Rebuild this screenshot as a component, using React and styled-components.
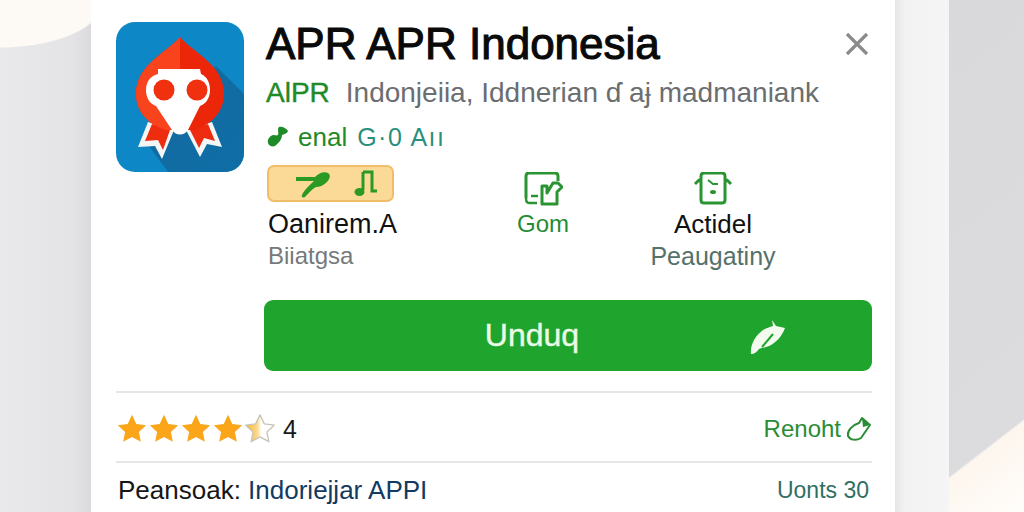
import React from "react";
import styled, { createGlobalStyle } from "styled-components";

const Global = createGlobalStyle`
  html, body { margin: 0; padding: 0; background: #e8e8ea; }
  body { font-family: "Liberation Sans", Arial, sans-serif; }
`;

const Page = styled.div`
  display: flex;
  width: 1024px;
  height: 512px;
  overflow: hidden;
`;
const LeftMargin = styled.div`
  width: 91px;
  flex: none;
  background:
    radial-gradient(ellipse 105px 48px at 0 0, #fdfaf6 98%, transparent 100%),
    linear-gradient(90deg, #e9e9eb 0%, #e4e4e6 80%, #dadadc 100%);
`;
const Card = styled.main`
  width: 804px;
  flex: none;
  box-sizing: border-box;
  padding: 22px 23px 0 25px;
  background: #fff;
`;
const Strip = styled.div`
  width: 54px;
  flex: none;
  background: linear-gradient(90deg, #e6e6e7 0%, #f2f2f3 18%, #f5f5f6 100%);
`;
const RightMargin = styled.div`
  flex: 1;
  background: linear-gradient(142.3deg, #d9d9dc 0, #dcdcdf 377px, #fdf6ee 379px, #fffdfb 100%);
`;
const Top = styled.section`
  display: flex;
  gap: 21px;
`;
const AppIcon = styled.svg`
  width: 128px;
  height: 150px;
  flex: none;
`;
const Info = styled.div`
  flex: 1;
  min-width: 0;
`;
const TitleRow = styled.div`
  display: flex;
  justify-content: space-between;
  align-items: center;
  height: 44px;
  padding-right: 2px;
`;
const Title = styled.h1`
  margin: 0 0 0 1px;
  font-size: 44px;
  font-weight: 400;
  -webkit-text-stroke: 1.1px #0a0a0a;
  color: #0a0a0a;
  white-space: nowrap;
`;
const Close = styled.svg`
  width: 26px;
  height: 26px;
  flex: none;
`;
const Subtitle = styled.p`
  margin: 11px 0 0 1px;
  font-size: 28px;
  line-height: 32px;
  color: #6b6e70;
  white-space: nowrap;
`;
const GreenStrong = styled.span`
  color: #1f8a28;
  -webkit-text-stroke: 0.4px #1f8a28;
  margin-right: 16px;
`;
const Meta = styled.div`
  display: flex;
  align-items: center;
  gap: 9px;
  margin: 13px 0 0 2px;
  height: 30px;
  font-size: 26px;
  color: #1f8a28;
`;
const MetaSoft = styled.span`
  color: #2c8f7d;
  font-size: 25px;
  letter-spacing: 1.5px;
  margin-left: 1px;
`;
const Features = styled.div`
  display: grid;
  grid-template-columns: 193px 170px 170px;
  margin-top: 13px;
`;
const Feature = styled.div`
  display: flex;
  flex-direction: column;
  align-items: ${(p) => (p.$start ? "flex-start" : "center")};
`;
const Badge = styled.div`
  box-sizing: border-box;
  display: flex;
  align-items: center;
  justify-content: space-between;
  width: 127px;
  height: 37px;
  margin-left: 2px;
  padding: 0 14px 0 26px;
  background: #fbd996;
  border: 2px solid #f1bd6a;
  border-radius: 7px;
`;
const FeatureIcon = styled.svg`
  display: block;
  width: 40px;
  height: 36px;
  margin-top: 7px;
`;
const FeatureLabel = styled.div`
  margin: ${(p) => (p.$start ? "6px 0 0 3px" : "0")};
  font-size: ${(p) => p.$size}px;
  line-height: 32px;
  color: ${(p) => p.$color};
  white-space: nowrap;
`;
const FeatureNote = styled.div`
  margin: 0 0 0 ${(p) => (p.$start ? "3px" : "0")};
  font-size: ${(p) => p.$size}px;
  line-height: 32px;
  color: ${(p) => p.$color};
  white-space: nowrap;
`;
const Download = styled.button`
  display: block;
  position: relative;
  box-sizing: border-box;
  width: 608px;
  height: 71px;
  margin: 28px 0 0 148px;
  border: 0;
  border-radius: 9px;
  background: #1fa52d;
  color: #eafbe6;
  font: 400 32px "Liberation Sans", Arial, sans-serif;
  -webkit-text-stroke: 0.4px #eafbe6;
  padding: 0 72px 0 0;
`;
const DownloadIcon = styled.svg`
  position: absolute;
  right: 85px;
  top: 19px;
  width: 38px;
  height: 36px;
`;
const Divider = styled.hr`
  margin: ${(p) => p.$top}px 0 0;
  border: 0;
  height: 2px;
  background: #e6e6e6;
`;
const Row = styled.div`
  display: flex;
  align-items: center;
  justify-content: space-between;
  box-sizing: border-box;
  height: ${(p) => p.$h}px;
  padding-top: ${(p) => p.$pad}px;
`;
const Stars = styled.div`
  display: flex;
  align-items: center;
  gap: 0;
  margin-left: -1px;
`;
const Star = styled.svg`
  width: 34px;
  height: 34px;
  display: block;
  margin-right: -2px;
`;
const Score = styled.span`
  margin-left: 8px;
  font-size: 25px;
  color: #1a1a1a;
`;
const ReportLink = styled.div`
  display: flex;
  align-items: center;
  gap: 5px;
  font-size: 24px;
  color: #2a8c34;
`;
const SmallIcon = styled.svg`
  width: 26px;
  height: 26px;
  display: block;
`;
const Publisher = styled.div`
  margin-left: 2px;
  font-size: 26px;
  color: #161616;
  white-space: nowrap;
`;
const PublisherName = styled.span`
  color: #123a62;
`;
const Units = styled.div`
  margin-right: 3px;
  font-size: 23px;
  color: #2f6f62;
`;

const starPath = "M15 2.5l3.8 8 8.7 1.1-6.4 6 1.7 8.6L15 22l-7.8 4.2 1.7-8.6-6.4-6 8.7-1.1z";

function RatingStar({ half }) {
  if (half) {
    return (
      <Star viewBox="0 0 30 30">
        <defs>
          <linearGradient id="halfStar">
            <stop offset="0" stopColor="#fbb22e" />
            <stop offset="0.4" stopColor="#fdd98a" />
            <stop offset="0.55" stopColor="#ffffff" />
          </linearGradient>
        </defs>
        <path d={starPath} fill="url(#halfStar)" stroke="#c8c4b8" strokeWidth="1.2" strokeLinejoin="round" />
      </Star>
    );
  }
  return (
    <Star viewBox="0 0 30 30">
      <path d={starPath} fill="#fba61a" />
    </Star>
  );
}

export default function App() {
  return (
    <Page>
      <Global />
      <LeftMargin />
      <Card>
        <Top>
          <AppIcon viewBox="0 0 128 150">
            <defs>
              <linearGradient id="shade" x1="0" y1="0" x2="1" y2="1">
                <stop offset="0" stopColor="#14699f" />
                <stop offset="1" stopColor="#0f6ea6" />
              </linearGradient>
              <clipPath id="tile">
                <rect width="128" height="150" rx="19" />
              </clipPath>
            </defs>
            <g clipPath="url(#tile)">
              <rect width="128" height="150" fill="#0e87c6" />
              <path d="M100 44L128 72V150H52L30 120Z" fill="url(#shade)" />
              <path d="M32 100L22 125L39 124L46 137L58 108Z" fill="#f3f6f5" />
              <path d="M36 102L29 119L42 118L47 128L54 108Z" fill="#ee2c10" />
              <path d="M96 100L106 125L91 122L84 135L70 108Z" fill="#f3f6f5" />
              <path d="M92 102L99 119L88 116L83 126L74 108Z" fill="#ee2c10" />
              <path d="M64 15C52 30 20 42 20 72C20 92 36 104 50 108H78C92 104 108 92 108 72C108 42 76 30 64 15Z" fill="#ec2608" />
              <path d="M64 15C52 30 20 42 20 72C20 92 36 104 50 108H64Z" fill="#f8431c" />
              <path d="M42 47H84L85 52C92 55 94 62 94 68C94 76 90 82 84 84L72 108C68 114 60 114 56 108L40 84C34 82 30 76 30 68C30 60 34 54 42 52Z" fill="#fff" />
              <circle cx="48" cy="68" r="10.5" fill="#f1300f" />
              <circle cx="81" cy="68" r="10.5" fill="#f1300f" />
            </g>
          </AppIcon>
          <Info>
            <TitleRow>
              <Title>APR APR Indonesia</Title>
              <Close viewBox="0 0 26 26">
                <path d="M3 3L23 23M23 3L3 23" stroke="#8b8b8b" strokeWidth="3.2" fill="none" />
              </Close>
            </TitleRow>
            <Subtitle>
              <GreenStrong>AlPR</GreenStrong>
              Indonjeiia, Iddnerian ɗ aɉ ṁadmaniank
            </Subtitle>
            <Meta>
              <svg width="22" height="22" viewBox="0 0 22 22">
                <path d="M12 1C15 0 19 2 21 5C20 8 17 8 15 9C15 13 12 17 8 20C5 21 2 20 1 17C0 13 3 10 6 9C8 9 9 10 11 9C12 7 10 3 12 1Z" fill="#1f8a28" />
              </svg>
              <span>enal</span>
              <MetaSoft>G·0 Aıı</MetaSoft>
            </Meta>
            <Features>
              <Feature $start>
                <Badge>
                  <svg width="36" height="28" viewBox="0 0 36 28">
                    <path d="M1 7H20C24 3 29 1 33 3C36 5 35 9 32 12C29 15 25 17 21 17C17 19 14 23 10 27C8 28 6 27 7 25C9 20 14 16 19 11H1Z" fill="#2a9a22" />
                  </svg>
                  <svg width="24" height="28" viewBox="0 0 24 28">
                    <path d="M9 2H18V21H23" fill="none" stroke="#2a9a22" strokeWidth="3" />
                    <path d="M9 2V20" fill="none" stroke="#2a9a22" strokeWidth="3" />
                    <ellipse cx="5.5" cy="22" rx="5" ry="4" fill="#2a9a22" />
                  </svg>
                </Badge>
                <FeatureLabel $start $size={27} $color="#111">Oanirem.A</FeatureLabel>
                <FeatureNote $start $size={24} $color="#75797c">Biiatgsa</FeatureNote>
              </Feature>
              <Feature>
                <FeatureIcon viewBox="0 0 40 36">
                  <path d="M3 26V4C3 2 4 1 6 1H32C34 1 35 2 35 4V9" fill="none" stroke="#2a9433" strokeWidth="3" />
                  <path d="M3 26C3 29 4 31 6 31H14M8 24H15" fill="none" stroke="#2a9433" strokeWidth="2.5" />
                  <path d="M19 32V14H24V21L30 11H35L39 15L34 20V32Z" fill="none" stroke="#2a9433" strokeWidth="3" strokeLinejoin="round" />
                </FeatureIcon>
                <FeatureLabel $size={24} $color="#258c31">Gom</FeatureLabel>
              </Feature>
              <Feature>
                <FeatureIcon viewBox="0 0 40 36">
                  <path d="M8 9V4C8 2 9 1 11 1H29C31 1 32 2 32 4V9M2 12L6 8L8 10V28C8 30 9 31 11 31H29C31 31 32 30 32 28V10L34 8L38 12" fill="none" stroke="#2a9433" strokeWidth="3" strokeLinejoin="round" />
                  <path d="M15 8L20 12H25" fill="none" stroke="#2a9433" strokeWidth="2" />
                  <ellipse cx="20" cy="20" rx="3" ry="2" fill="#2a9433" />
                </FeatureIcon>
                <FeatureLabel $size={26} $color="#111">Actidel</FeatureLabel>
                <FeatureNote $size={25} $color="#54726a">Peaugatiny</FeatureNote>
              </Feature>
            </Features>
          </Info>
        </Top>
        <Download>
          Unduq
          <DownloadIcon viewBox="0 0 38 36">
            <path d="M23 1L27 7L36 9C33 17 27 24 20 27C15 29 12 29 10 30C8 33 5 35 2 35C1 26 6 17 14 11C17 9 21 8 24 7Z" fill="#f2fbee" />
            <path d="M24 15L13 28" stroke="#1fa52d" strokeWidth="2" />
          </DownloadIcon>
        </Download>
        <Divider $top={20} />
        <Row $h={68} $pad={4}>
          <Stars>
            <RatingStar />
            <RatingStar />
            <RatingStar />
            <RatingStar />
            <RatingStar half />
            <Score>4</Score>
          </Stars>
          <ReportLink>
            Renoht
            <SmallIcon viewBox="0 0 26 26">
              <path d="M16 2L24 9L15 22C10 25 4 24 2 20C1 15 6 9 13 7Z" fill="none" stroke="#2a8c34" strokeWidth="2" strokeLinejoin="round" />
              <path d="M16 2L24 9L17 11Z" fill="#2a8c34" />
            </SmallIcon>
          </ReportLink>
        </Row>
        <Divider $top={0} />
        <Row $h={54} $pad={0}>
          <Publisher>
            Peansoak: <PublisherName>Indoriejjar APPI</PublisherName>
          </Publisher>
          <Units>Uonts 30</Units>
        </Row>
      </Card>
      <Strip />
      <RightMargin />
    </Page>
  );
}
